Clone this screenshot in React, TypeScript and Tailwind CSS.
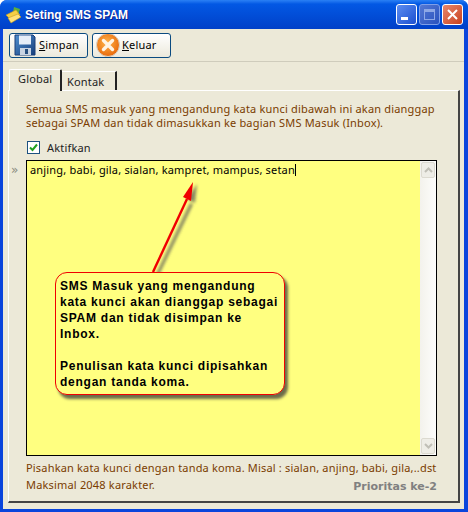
import React from 'react';

const tahoma = 'font-["Noto_Sans",sans-serif] text-[11px] tracking-[0.18px]';

const FloppyIcon = () => (
  <svg width="22" height="22" viewBox="0 0 22 22">
    <defs>
      <linearGradient id="disk" x1="0" y1="0" x2="1" y2="1">
        <stop offset="0%" stopColor="#4f8fd0" />
        <stop offset="100%" stopColor="#173f7c" />
      </linearGradient>
    </defs>
    <path d="M1 1h18l2 2v18H1z" fill="url(#disk)" stroke="#1b3f78" />
    <rect x="5" y="1.5" width="12" height="9" fill="#e6eef8" />
    <rect x="6" y="14" width="11" height="7" fill="#c9d4e2" />
    <rect x="11" y="15" width="3" height="5" fill="#28507f" />
  </svg>
);

const CloseIcon = () => (
  <svg width="24" height="24" viewBox="0 0 24 24">
    <defs>
      <radialGradient id="orange" cx="45%" cy="40%" r="60%">
        <stop offset="0%" stopColor="#ffb54a" />
        <stop offset="100%" stopColor="#e8690b" />
      </radialGradient>
    </defs>
    <circle cx="12" cy="12" r="11.5" fill="url(#orange)" stroke="#d9d5cc" />
    <path d="M7.5 7.5l9 9M16.5 7.5l-9 9" stroke="#fff4e4" strokeWidth="3.4" strokeLinecap="round" />
  </svg>
);

const AppIcon = () => (
  <svg width="18" height="18" viewBox="0 0 18 18">
    <path d="M9 1l6 2-2 6-5-3z" fill="#5cae3c" />
    <path d="M1 9l10-5 4 5-9 5z" fill="#f4cf45" stroke="#c69a1c" strokeWidth="0.6" />
    <path d="M3 12l10-4 3 3-10 6z" fill="#ffe27a" stroke="#c69a1c" strokeWidth="0.6" />
  </svg>
);

const WinButton = ({ kind }: { kind: 'min' | 'max' | 'close' }) => {
  const face =
    kind === 'close'
      ? 'bg-gradient-to-br from-[#e9866a] to-[#c8401a]'
      : kind === 'min'
        ? 'bg-gradient-to-br from-[#5c8cf0] to-[#1c4fd0]'
        : 'bg-gradient-to-br from-[#5478d4] to-[#2a52be]';
  return (
    <div className={`w-[21px] h-[21px] rounded-[3px] border flex items-center justify-center ${kind === 'max' ? 'border-[#7f9fe8]' : 'border-white'} ${face}`}>
      {kind === 'min' && <div className="w-[7px] h-[3px] bg-white mt-[8px] mr-[4px]" />}
      {kind === 'max' && <div className="w-[11px] h-[11px] border border-[#8ea8e6] border-t-[3px]" />}
      {kind === 'close' && (
        <svg width="13" height="13" viewBox="0 0 13 13">
          <path d="M2 2l9 9M11 2l-9 9" stroke="#fff" strokeWidth="2" />
        </svg>
      )}
    </div>
  );
};

const ToolButton = ({ icon, label, hot }: { icon: React.ReactNode; label: string; hot: string }) => (
  <button className="w-[79px] h-[25px] rounded-[3px] border border-[#0a4a80] bg-gradient-to-b from-white to-[#ece9dc] flex items-center overflow-hidden">
    <span className="w-[29px] flex justify-center shrink-0">{icon}</span>
    <span className={`${tahoma} text-black`}>
      <span className="underline">{hot}</span>
      {label}
    </span>
  </button>
);

export default function App() {
  return (
    <div className="relative w-[468px] h-[512px] flex flex-col overflow-hidden rounded-t-[7px] bg-[#0a45dc]">
      {/* Title bar */}
      <div className="h-[29px] shrink-0 flex items-center pl-[5px] pr-[5px] gap-[2px] bg-gradient-to-b from-[#2a80f5] via-[#0358e4] via-[14%] to-[#0140c8]">
        <AppIcon />
        <span className="flex-1 font-['Liberation_Sans',sans-serif] font-bold text-[12px] text-white [text-shadow:1px_1px_0_#0f1f8a]">Seting SMS SPAM</span>
        <div className="flex gap-[2px]">
          <WinButton kind="min" />
          <WinButton kind="max" />
          <WinButton kind="close" />
        </div>
      </div>

      {/* Body */}
      <div className="flex-1 mx-[3px] mb-[3px] mr-[4px] bg-[#ece9d8] flex flex-col">
        <div className="h-[33px] shrink-0 border-b border-[#cfccbc] flex items-center pl-[6px] gap-[4px]">
          <ToolButton icon={<FloppyIcon />} hot="S" label="impan" />
          <ToolButton icon={<CloseIcon />} hot="K" label="eluar" />
        </div>

        {/* Tabs */}
        <div className="flex items-end pl-[6px] h-[28px] shrink-0">
          <div className={`${tahoma} w-[53px] h-[22px] pl-[8px] pt-[1px] text-[#222] bg-[#ece9d8] border-t border-l border-white border-r-2 border-r-[#222] rounded-t-[2px] relative top-[1px] z-10`}>Global</div>
          <div className={`${tahoma} w-[55px] h-[19px] pl-[5px] pt-[2px] text-[#222] border-t border-white border-r-2 border-r-[#222]`}>Kontak</div>
        </div>

        {/* Tab panel */}
        <div className="relative ml-[5px] mr-[4px] h-[413px] border-t border-l border-white border-r-2 border-b-2 border-r-[#444] border-b-[#444] pl-[17px] pr-[21px] flex flex-col">
          <p className={`${tahoma} text-[#7a3c00] mt-[11px] leading-[14px] whitespace-nowrap`}>
            Semua SMS masuk yang mengandung kata kunci dibawah ini akan dianggap
            <br />
            sebagai SPAM dan tidak dimasukkan ke bagian SMS Masuk (Inbox).
          </p>
          <label className="flex items-center gap-[7px] mt-[10px] h-[14px] ml-[1px]">
            <span className="w-[13px] h-[13px] border border-[#1c5180] bg-white flex items-center justify-center">
              <svg width="9" height="9" viewBox="0 0 9 9">
                <path d="M1 4.5l2.5 2.5L8 1.5" fill="none" stroke="#21a121" strokeWidth="2" />
              </svg>
            </span>
            <span className={`${tahoma} text-[#222] pt-[3px]`}>Aktifkan</span>
          </label>

          {/* Keyword box */}
          <div className="relative mt-[6px] h-[296px] border border-black bg-[#ffff80] flex">
            <span className="absolute left-[-16px] top-[0px] font-['DejaVu_Sans',sans-serif] text-[12px] text-[#8a8a80]">»</span>
            <div className={`${tahoma} flex-1 px-[3px] pt-[1px] text-black whitespace-nowrap`}>
              anjing, babi, gila, sialan, kampret, mampus, setan
              <span className="inline-block w-px h-[12px] bg-black align-[-2px]" />
            </div>
            <div className="w-[16px] bg-gradient-to-r from-[#f3f2ec] to-[#fdfdfb] flex flex-col justify-between">
              <div className="h-[16px] m-px rounded-[2px] bg-[#eeede6] border border-[#dcdad0] flex items-center justify-center">
                <svg width="9" height="6" viewBox="0 0 9 6"><path d="M1 5l3.5-3.5L8 5" fill="none" stroke="#c0bfb6" strokeWidth="2" /></svg>
              </div>
              <div className="h-[16px] m-px rounded-[2px] bg-[#eeede6] border border-[#dcdad0] flex items-center justify-center">
                <svg width="9" height="6" viewBox="0 0 9 6"><path d="M1 1l3.5 3.5L8 1" fill="none" stroke="#c0bfb6" strokeWidth="2" /></svg>
              </div>
            </div>
          </div>

          <div className="relative mt-[3px]">
            <p className={`${tahoma} text-[#7a3c00] leading-[17px] whitespace-nowrap`}>
              Pisahkan kata kunci dengan tanda koma. Misal : sialan, anjing, babi, gila,..dst
              <br />
              Maksimal 2048 karakter.
            </p>
            <span className="absolute right-[0px] top-[20px] font-['DejaVu_Sans',sans-serif] font-bold text-[11px] text-[#808080]">Prioritas ke-2</span>
          </div>
        </div>
      </div>

      {/* Annotation over the keyword box */}
      <svg className="absolute left-[140px] top-[175px]" width="70" height="105" viewBox="0 0 70 105">
        <defs>
          <filter id="soft" x="-30%" y="-30%" width="160%" height="160%">
            <feGaussianBlur stdDeviation="1.5" />
          </filter>
        </defs>
        <g fill="#555" opacity="0.7" transform="translate(4 2)" filter="url(#soft)">
          <path d="M12 97L46 26l3 1.5L15 98z" />
          <path d="M53 7L43 22l8 4z" />
        </g>
        <path d="M13 97L47 24" stroke="#f00000" strokeWidth="2.4" />
        <path d="M53 7L43 22l8 4z" fill="#f00000" />
      </svg>
      <div className="absolute left-[55px] top-[272px] w-[230px] h-[123px] rounded-[12px] border-[1.5px] border-[#f00000] bg-[#ffff80] shadow-[3px_4px_3px_#6b6b4a] pl-[4px] pt-[5px] font-['Liberation_Sans',sans-serif] font-bold text-[12px] leading-[16px] tracking-[0.75px] text-black whitespace-nowrap">
        SMS Masuk yang mengandung
        <br />
        kata kunci akan dianggap sebagai
        <br />
        SPAM dan tidak disimpan ke
        <br />
        Inbox.
        <br />
        <br />
        Penulisan kata kunci dipisahkan
        <br />
        dengan tanda koma.
      </div>
    </div>
  );
}
